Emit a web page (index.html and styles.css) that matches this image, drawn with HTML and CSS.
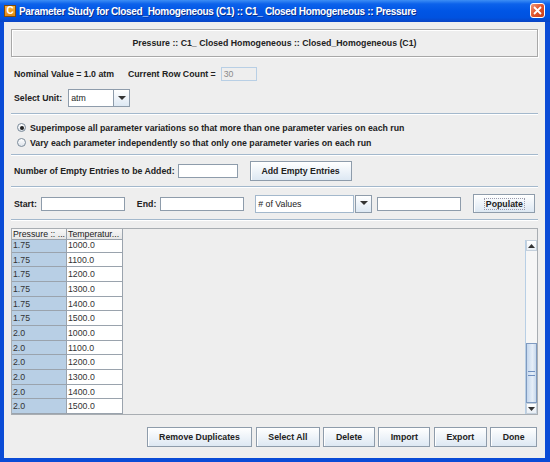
FILE: index.html
```html
<!DOCTYPE html>
<html lang="en">
<head>
  <meta charset="UTF-8">
  <title>Parameter Study</title>
  <link rel="stylesheet" href="styles.css">
</head>
<body>

<div class="window">
  <div class="titlebar">
    <span class="app-icon">C</span>
    <span class="title">Parameter Study for Closed_Homogeneous (C1) :: C1_ Closed Homogeneous :: Pressure</span>
    <span class="close-btn">
      <svg width="9" height="9" viewBox="0 0 9 9"><path d="M1 1 L8 8 M8 1 L1 8" stroke="#fff" stroke-width="1.8"/></svg>
    </span>
  </div>

  <div class="content">
    <div class="header-box">Pressure :: C1_ Closed Homogeneous :: Closed_Homogeneous (C1)</div>

    <div class="row nominal">
      <span class="label">Nominal Value = 1.0 atm</span>
      <span class="label count-label">Current Row Count =</span>
      <span class="field disabled count-field">30</span>
    </div>

    <div class="row unit">
      <span class="label">Select Unit:</span>
      <div class="combo unit-combo">
        <span class="combo-value">atm</span>
        <span class="combo-btn"><svg width="8" height="5" viewBox="0 0 8 5"><path d="M0 0 H8 L4 4 Z" fill="#333"/></svg></span>
      </div>
    </div>

    <div class="sep"></div>

    <div class="radios">
      <div class="radio-row"><span class="radio checked"></span>Superimpose all parameter variations so that more than one parameter varies on each run</div>
      <div class="radio-row"><span class="radio"></span>Vary each parameter independently so that only one parameter varies on each run</div>
    </div>

    <div class="sep"></div>

    <div class="row entries">
      <span class="label">Number of Empty Entries to be Added:</span>
      <span class="field entries-field"></span>
      <span class="btn add-btn">Add Empty Entries</span>
    </div>

    <div class="sep"></div>

    <div class="row range">
      <span class="label">Start:</span>
      <span class="field range-field"></span>
      <span class="label end-label">End:</span>
      <span class="field range-field"></span>
      <div class="combo values-combo">
        <span class="combo-value">#&nbsp;of Values</span>
        <span class="combo-btn"><svg width="8" height="5" viewBox="0 0 8 5"><path d="M0 0 H8 L4 4 Z" fill="#333"/></svg></span>
      </div>
      <span class="field range-field count-values"></span>
      <span class="btn populate-btn"><span class="focus">Populate</span></span>
    </div>

    <div class="sep"></div>

    <div class="table-pane">
      <div class="table-head">
        <span class="th col-a">Pressure :: ...</span>
        <span class="th col-b">Temperatur...</span>
      </div>
      <div class="table-area">
        <div class="viewport">
          <div class="rows" id="rows"></div>
        </div>
        <div class="scrollbar">
          <span class="sb-btn"><svg width="7" height="4" viewBox="0 0 7 4"><path d="M0 4 H7 L3.5 0 Z" fill="#333"/></svg></span>
          <span class="sb-track"></span>
          <span class="sb-thumb"><span class="grip"></span></span>
          <span class="sb-btn"><svg width="7" height="4" viewBox="0 0 7 4"><path d="M0 0 H7 L3.5 4 Z" fill="#333"/></svg></span>
        </div>
      </div>
    </div>

    <div class="actions">
      <span class="btn">Remove Duplicates</span>
      <span class="btn">Select All</span>
      <span class="btn">Delete</span>
      <span class="btn">Import</span>
      <span class="btn">Export</span>
      <span class="btn">Done</span>
    </div>
  </div>
</div>

<script>
  // last rows of the study, table is scrolled to the bottom
  const rows = document.getElementById('rows');
  const pressures = ['1.75', '2.0'];
  const temps = ['1000.0', '1100.0', '1200.0', '1300.0', '1400.0', '1500.0'];

  pressures.forEach(p => {
    temps.forEach(t => {
      const row = document.createElement('div');
      row.className = 'tr';
      row.innerHTML = `<span class="td col-a">${p}</span><span class="td col-b">${t}</span>`;
      rows.appendChild(row);
    });
  });
</script>

</body>
</html>
```

FILE: styles.css
```css
body {
  margin: 0;
  font-family: "Liberation Sans", Arial, sans-serif;
  color: #222;
}

.window {
  width: 550px;
  height: 462px;
  display: flex;
  flex-direction: column;
  background-color: #0a4bd6;
}

.titlebar {
  height: 22px;
  display: flex;
  align-items: center;
  background: linear-gradient(#3d8ef5 0%, #0c62eb 18%, #0055e5 50%, #0052e0 80%, #0a44c4 100%);
  color: white;
  position: relative;
}

.app-icon {
  width: 12px;
  height: 12px;
  margin-left: 4px;
  background: linear-gradient(#f7b23a, #e58a12);
  border: 1px solid #7a4a10;
  box-sizing: border-box;
  color: white;
  font-weight: bold;
  font-size: 10px;
  line-height: 10px;
  text-align: center;
}

.title {
  margin-left: 3px;
  font-weight: bold;
  font-size: 10px;
  letter-spacing: -0.32px;
  text-shadow: 1px 1px #0a2e8a;
}

.close-btn {
  position: absolute;
  left: 530px;
  top: 3px;
  width: 15px;
  height: 15px;
  box-sizing: border-box;
  border: 1px solid #fff;
  border-radius: 3px;
  background: linear-gradient(135deg, #f09a78, #e0532b 50%, #c8401c);
  display: flex;
  justify-content: center;
  align-items: center;
}

.content {
  flex: 1;
  margin: 0 5px 4px 4px;
  background-color: #eeeeee;
  padding: 7px 7px 0 7px;
  display: flex;
  flex-direction: column;
  font-size: 8.75px;
}

.header-box {
  height: 28px;
  box-sizing: border-box;
  border: 1px solid #a8a8a8;
  box-shadow: inset 1px 1px #fff, 1px 1px #fff;
  display: flex;
  justify-content: center;
  align-items: center;
  font-weight: bold;
}

.row {
  display: flex;
  align-items: center;
  padding-left: 3px;
}

.label {
  font-weight: bold;
  white-space: nowrap;
}

.nominal {
  margin-top: 8px;
  height: 18px;
}

.count-label {
  margin-left: 14px;
}

.field {
  height: 14px;
  box-sizing: border-box;
  background-color: white;
  border: 1px solid #8e9cab;
  display: flex;
  align-items: center;
  padding-left: 2px;
}

.field.disabled {
  background-color: #eeeeee;
  border-color: #b8cfe5;
  color: #8a8a8a;
}

.count-field {
  width: 36px;
  margin-left: 5px;
}

.unit {
  margin-top: 6px;
  height: 18px;
}

.combo {
  display: flex;
  height: 18px;
  box-sizing: border-box;
  border: 1px solid #8e9cab;
  background-color: white;
}

.unit-combo {
  width: 62px;
  margin-left: 6px;
}

.combo-value {
  flex: 1;
  display: flex;
  align-items: center;
  padding-left: 2px;
}

.combo-btn {
  width: 15px;
  border-left: 1px solid #8e9cab;
  background: linear-gradient(#ffffff, #dde8f3);
  display: flex;
  justify-content: center;
  align-items: center;
}

.sep {
  height: 1px;
  border-top: 1px solid #a3b8cc;
  background-color: #fff;
  margin-top: 6px;
}

.radios {
  margin-top: 5px;
  display: flex;
  flex-direction: column;
}

.radio-row {
  height: 15px;
  display: flex;
  align-items: center;
  padding-left: 6px;
  font-weight: bold;
  white-space: nowrap;
}

.radio {
  width: 9px;
  height: 9px;
  border-radius: 50%;
  border: 1px solid #7a8a99;
  background: linear-gradient(#ffffff, #dde3ea);
  margin-right: 4px;
  box-sizing: border-box;
  display: flex;
  justify-content: center;
  align-items: center;
}

.radio.checked::after {
  content: "";
  width: 4px;
  height: 4px;
  border-radius: 50%;
  background-color: #222;
}

.radios + .sep {
  margin-top: 4px;
}

.entries {
  margin-top: 5px;
  height: 20px;
}

.entries-field {
  width: 60px;
  margin-left: 3px;
}

.btn {
  height: 20px;
  box-sizing: border-box;
  padding: 0 11.5px;
  border: 1px solid #8e9cab;
  background: linear-gradient(#ffffff, #dde8f3);
  box-shadow: inset 1px 1px #fff;
  display: flex;
  align-items: center;
  justify-content: center;
  font-weight: bold;
  white-space: nowrap;
}

.add-btn {
  margin-left: 12px;
  width: 102px;
}

.entries + .sep {
  margin-top: 5px;
}

.range {
  margin-top: 6px;
  height: 19px;
}

.range-field {
  width: 84px;
  margin-left: 4px;
}

.end-label {
  margin-left: 12px;
}

.values-combo {
  width: 117px;
  margin-left: 11px;
  border: none;
  background: none;
}

.values-combo .combo-value {
  background-color: white;
  border: 1px solid #a3b8cc;
  margin-right: 1px;
}

.values-combo .combo-btn {
  border: 1px solid #8e9cab;
}

.count-values {
  margin-left: 5px;
}

.populate-btn {
  width: 62px;
  height: 19px;
  margin-left: 12px;
}

.populate-btn .focus {
  outline: 1px dotted #99a;
  padding: 0 1px;
}

.table-pane {
  margin-top: 7px;
  height: 187px;
  box-sizing: border-box;
  border: 1px solid #a8adb2;
  display: flex;
  flex-direction: column;
}

.table-head {
  height: 11px;
  display: flex;
}

.th {
  box-sizing: border-box;
  border: 1px solid #9aa3ad;
  border-left: none;
  border-top: none;
  background: linear-gradient(#f7f7f7, #e6e6e6);
  padding-left: 1px;
  line-height: 10px;
  overflow: hidden;
  white-space: nowrap;
}

.col-a {
  width: 55px;
}

.col-b {
  width: 56px;
}

.table-area {
  flex: 1;
  display: flex;
  min-height: 0;
}

.viewport {
  flex: 1;
  overflow: hidden;
  display: flex;
  flex-direction: column;
  justify-content: flex-end;
}

.rows {
  display: flex;
  flex-direction: column;
}

.tr {
  display: flex;
  height: 14.67px;
}

.td {
  box-sizing: border-box;
  border-right: 1px solid #9aa3ad;
  border-bottom: 1px solid #9aa3ad;
  padding-left: 1px;
  display: flex;
  align-items: center;
  color: #333;
}

.td.col-a {
  background-color: #b8cfe5;
}

.td.col-b {
  background-color: white;
}

.scrollbar {
  width: 11px;
  display: flex;
  flex-direction: column;
  border-left: 1px solid #b8cfe5;
  background-color: #f6f6f6;
}

.sb-btn {
  height: 11px;
  box-sizing: border-box;
  border: 1px solid #c4d0dc;
  background: linear-gradient(#ffffff, #e8eef5);
  display: flex;
  justify-content: center;
  align-items: center;
}

.sb-track {
  flex: 1;
}

.sb-thumb {
  height: 60px;
  box-sizing: border-box;
  border: 1px solid #7f9ac0;
  background: linear-gradient(90deg, #c5d8ee, #e6eef8 60%, #c8d9ec);
  display: flex;
  justify-content: center;
  align-items: center;
}

.grip {
  width: 7px;
  height: 3px;
  border-top: 1px solid #6f8fbf;
  border-bottom: 1px solid #6f8fbf;
}

.actions {
  margin-top: 12px;
  display: flex;
  justify-content: flex-end;
  gap: 3.5px;
  padding-right: 1px;
}
```
